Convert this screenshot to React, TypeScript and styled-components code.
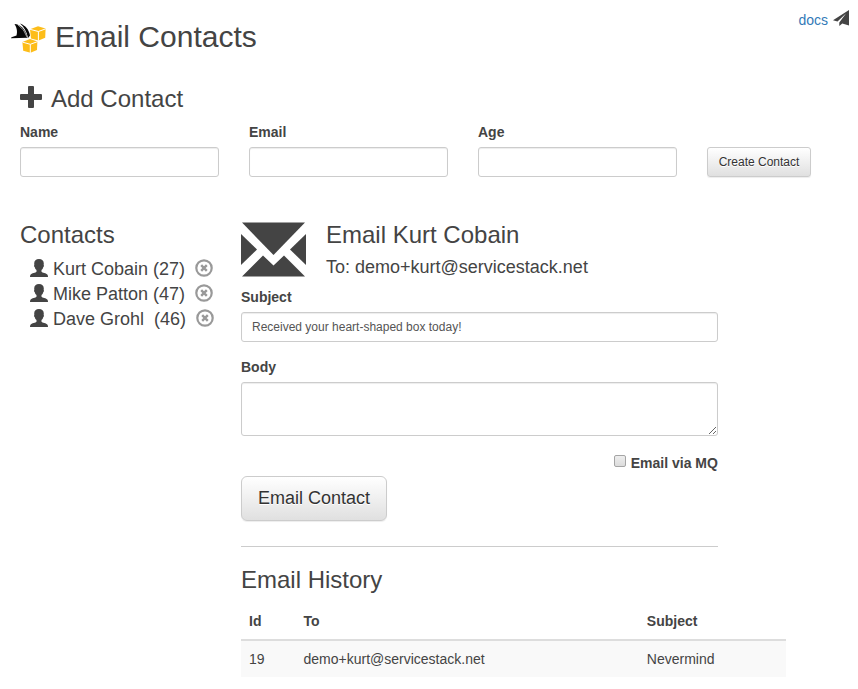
import React, { useState } from "react";
import styled, { createGlobalStyle, css } from "styled-components";

const GlobalStyle = createGlobalStyle`
  *, *::before, *::after { box-sizing: border-box; }
  body {
    margin: 0;
    background: #fff;
    color: #444;
    font: 14px/20px "Liberation Sans", Arial, sans-serif;
  }
  h1, h2, h3 { margin: 0; font-weight: 400; }
  button, input, textarea { font-family: inherit; color: inherit; }
`;

const Page = styled.div`
  padding: 10px 9px 12px 10px;
`;

const Header = styled.header`
  display: flex;
  justify-content: space-between;
  align-items: flex-start;
`;

const Brand = styled.div`
  display: flex;
  align-items: center;
  gap: 8px;
  padding-top: 10px;
`;

const Title = styled.h1`
  font-size: 30px;
  line-height: 33px;
`;

const DocsLink = styled.a`
  display: flex;
  align-items: flex-start;
  gap: 5px;
  color: #337ab7;
  text-decoration: none;
`;

const Heading = styled.h2`
  display: flex;
  align-items: flex-start;
  gap: 9px;
  font-size: 24px;
  line-height: 26px;
`;

const AddSection = styled.section`
  padding: 33px 38px 0 10px;
`;

const AddForm = styled.form`
  display: grid;
  grid-template-columns: repeat(3, 1fr) auto;
  gap: 30px;
  align-items: end;
  margin-top: 10px;
`;

const Field = styled.div`
  display: flex;
  flex-direction: column;
  gap: 5px;
  min-width: 0;
`;

const Label = styled.label`
  font-weight: 700;
`;

const control = css`
  width: 100%;
  padding: 5px 10px;
  border: 1px solid #ccc;
  border-radius: 3px;
  background: #fff;
  box-shadow: inset 0 1px 1px rgba(0, 0, 0, 0.075);
  color: #555;
  font-size: 12px;
  line-height: 18px;
`;

const TextInput = styled.input`
  ${control}
  height: 30px;
`;

const TextArea = styled.textarea`
  ${control}
  display: block;
  height: 54px;
  resize: vertical;
`;

const Button = styled.button<{ $large?: boolean }>`
  min-width: 104px;
  padding: ${(p) => (p.$large ? "10px 16px" : "5px 10px")};
  border: 1px solid #ccc;
  border-radius: ${(p) => (p.$large ? 6 : 3)}px;
  background: linear-gradient(#fff, #e0e0e0);
  box-shadow: inset 0 1px 0 rgba(255, 255, 255, 0.15), 0 1px 1px rgba(0, 0, 0, 0.075);
  color: #333;
  font-size: ${(p) => (p.$large ? 18 : 12)}px;
  line-height: ${(p) => (p.$large ? 23 : 18)}px;
  text-shadow: 0 1px 0 #fff;
  white-space: nowrap;
  cursor: pointer;
`;

const Columns = styled.div`
  display: grid;
  grid-template-columns: 221px minmax(0, 1fr);
  padding: 45px 63px 0 10px;
`;

const ContactList = styled.ul`
  margin: 9px 0 0;
  padding: 0 0 0 10px;
  list-style: none;
`;

const ContactItem = styled.li`
  display: flex;
  align-items: flex-start;
  gap: 10px;
  height: 25px;
`;

const PlainButton = styled.button`
  display: flex;
  align-items: flex-start;
  gap: 5px;
  padding: 0;
  border: 0;
  background: none;
  font-size: 18px;
  line-height: 25px;
  white-space: pre;
  cursor: pointer;
  svg { margin-top: 2px; }
`;

const EmailForm = styled.form`
  width: 87.5%;
  display: flex;
  flex-direction: column;
  gap: 15px;
  padding-bottom: 25px;
  border-bottom: 1px solid #ccc;
`;

const Recipient = styled.div`
  display: flex;
  gap: 20px;
  margin-bottom: -5px;
`;

const RecipientText = styled.div`
  display: flex;
  flex-direction: column;
  gap: 9px;
`;

const ToLine = styled.h3`
  font-size: 18px;
  line-height: 20px;
`;

const CheckRow = styled.div`
  display: flex;
  justify-content: flex-end;
  align-items: center;
  gap: 5px;
  margin: 2px 0 -12px;
`;

const Checkbox = styled.input`
  appearance: none;
  width: 12px;
  height: 12px;
  margin: 0 0 4px;
  border: 1px solid #a5a5a5;
  border-radius: 2px;
  background: linear-gradient(#eee, #dcdcdc);
  &:checked { background: #666; }
`;

const SubmitRow = styled.div`
  display: flex;
`;

const History = styled.section`
  padding-top: 20px;
`;

const Table = styled.table`
  width: 100%;
  margin-top: 10px;
  border-collapse: collapse;
  table-layout: fixed;
  th, td { padding: 8px; text-align: left; }
  th { border-bottom: 2px solid #ddd; }
  td { background: #f9f9f9; }
  th:nth-child(1) { width: 10%; }
  th:nth-child(2) { width: 63%; }
`;

const Logo = () => (
  <svg width="37" height="33" viewBox="0 0 37 33" aria-hidden="true">
    <path d="M4.500 4C10 4.500 15.500 8.500 17.500 17.800L1 18.200 1.500 17.300 6.500 15.500C7.800 11 6.500 7 4.500 4z" fill="#080808" />
    <path d="M10 3.500C15.500 5.500 19 9.500 20 15.500L18 18C16.800 11.500 14 7 10 3.500z" fill="#080808" />
    <path d="M8 5Q14.500 9 17 17" fill="none" stroke="#fff" strokeWidth=".6" />
    <path d="M20 9.200L28 6.300 35.600 8.600 35.200 17.800 28.600 20.600 21 18.500z" fill="#fdbd19" />
    <path d="M20 9.300L28.400 11.500 35.800 8.800M28.400 11.500V20.800" fill="none" stroke="#fff" strokeWidth="1" />
    <path d="M12.400 22L20 19.100 27.400 21.400 27 30 20.500 32.800 13.200 30.800z" fill="#fdbd19" />
    <path d="M12.400 22.100L20.300 24.300 27.600 21.600M20.300 24.300V33" fill="none" stroke="#fff" strokeWidth="1" />
  </svg>
);

const PlaneIcon = () => (
  <svg width="16" height="16" viewBox="0 0 16 16" fill="#444" aria-hidden="true">
    <path d="M16 0L0 10.200l4.500 1.300L13 3.500 6.300 12.500V16l3-2.600L16 15.500z" />
  </svg>
);

const PlusIcon = () => (
  <svg width="22" height="22" viewBox="0 0 22 22" fill="#444" aria-hidden="true">
    <path d="M9 0h4q1 0 1 1v7h7q1 0 1 1v4q0 1-1 1h-7v7q0 1-1 1H9q-1 0-1-1v-7H1q-1 0-1-1V9q0-1 1-1h7V1q0-1 1-1z" />
  </svg>
);

const UserIcon = () => (
  <svg width="18" height="18" viewBox="0 0 18 18" fill="#444" aria-hidden="true">
    <path d="M9 0C6 0 4.200 1.700 4.200 4.400c0 .7.1 1.200.2 1.700-.6.2-.4 1.800.4 2.200.3 1.300.9 2.100 1.700 2.800v1.600c-.5 1-5 1.400-6 3C.1 16.400 0 17.200 0 18h18c0-.8-.1-1.600-.5-2.300-1-1.600-5.500-2-6-3v-1.600c.8-.7 1.400-1.500 1.700-2.800.8-.4 1-2 .4-2.200.1-.5.2-1 .2-1.700C13.800 1.700 12 0 9 0z" />
  </svg>
);

const RemoveIcon = () => (
  <svg width="18" height="18" viewBox="0 0 18 18" fill="none" stroke="#999" aria-hidden="true">
    <circle cx="9" cy="9" r="7.700" strokeWidth="2.200" />
    <path d="M6.200 6.200l5.600 5.600M11.800 6.200l-5.600 5.600" strokeWidth="2.400" />
  </svg>
);

const EnvelopeIcon = () => (
  <svg width="65" height="55" viewBox="0 0 65 55" fill="#444" aria-hidden="true">
    <path d="M1 0.500H64L32.500 33z" />
    <path d="M0 12L16 27.500 0 43z" />
    <path d="M65 12V43L49 27.500z" />
    <path d="M1 54.500L22 33.500 32.500 43.500 43 33.500 64 54.500z" />
  </svg>
);

const contacts = [
  { name: "Kurt Cobain", age: 27, email: "demo+kurt@servicestack.net" },
  { name: "Mike Patton", age: 47, email: "demo+mike@servicestack.net" },
  { name: "Dave Grohl ", age: 46, email: "demo+dave@servicestack.net" },
];

const history = [{ id: 19, to: "demo+kurt@servicestack.net", subject: "Nevermind" }];

export default function App() {
  const [selected, setSelected] = useState(contacts[0]);
  const ignore = (e: React.FormEvent) => e.preventDefault();

  return (
    <>
      <GlobalStyle />
      <Page>
        <Header>
          <Brand>
            <Logo />
            <Title>Email Contacts</Title>
          </Brand>
          <DocsLink href="#docs">
            docs
            <PlaneIcon />
          </DocsLink>
        </Header>

        <AddSection>
          <Heading>
            <PlusIcon />
            Add Contact
          </Heading>
          <AddForm onSubmit={ignore}>
            {["Name", "Email", "Age"].map((label) => (
              <Field key={label}>
                <Label htmlFor={`contact-${label}`}>{label}</Label>
                <TextInput id={`contact-${label}`} type="text" />
              </Field>
            ))}
            <Button type="submit">Create Contact</Button>
          </AddForm>
        </AddSection>

        <Columns>
          <section>
            <Heading>Contacts</Heading>
            <ContactList>
              {contacts.map((c) => (
                <ContactItem key={c.name}>
                  <PlainButton type="button" onClick={() => setSelected(c)}>
                    <UserIcon />
                    {`${c.name} (${c.age})`}
                  </PlainButton>
                  <PlainButton type="button" aria-label={`Remove ${c.name}`}>
                    <RemoveIcon />
                  </PlainButton>
                </ContactItem>
              ))}
            </ContactList>
          </section>

          <main>
            <EmailForm onSubmit={ignore}>
              <Recipient>
                <EnvelopeIcon />
                <RecipientText>
                  <Heading>Email {selected.name}</Heading>
                  <ToLine>To: {selected.email}</ToLine>
                </RecipientText>
              </Recipient>
              <Field>
                <Label htmlFor="subject">Subject</Label>
                <TextInput id="subject" type="text" defaultValue="Received your heart-shaped box today!" />
              </Field>
              <Field>
                <Label htmlFor="body">Body</Label>
                <TextArea id="body" />
              </Field>
              <CheckRow>
                <Checkbox id="via-mq" type="checkbox" />
                <Label htmlFor="via-mq">Email via MQ</Label>
              </CheckRow>
              <SubmitRow>
                <Button type="submit" $large>Email Contact</Button>
              </SubmitRow>
            </EmailForm>

            <History>
              <Heading>Email History</Heading>
              <Table>
                <thead>
                  <tr>
                    <th scope="col">Id</th>
                    <th scope="col">To</th>
                    <th scope="col">Subject</th>
                  </tr>
                </thead>
                <tbody>
                  {history.map((row) => (
                    <tr key={row.id}>
                      <td>{row.id}</td>
                      <td>{row.to}</td>
                      <td>{row.subject}</td>
                    </tr>
                  ))}
                </tbody>
              </Table>
            </History>
          </main>
        </Columns>
      </Page>
    </>
  );
}
